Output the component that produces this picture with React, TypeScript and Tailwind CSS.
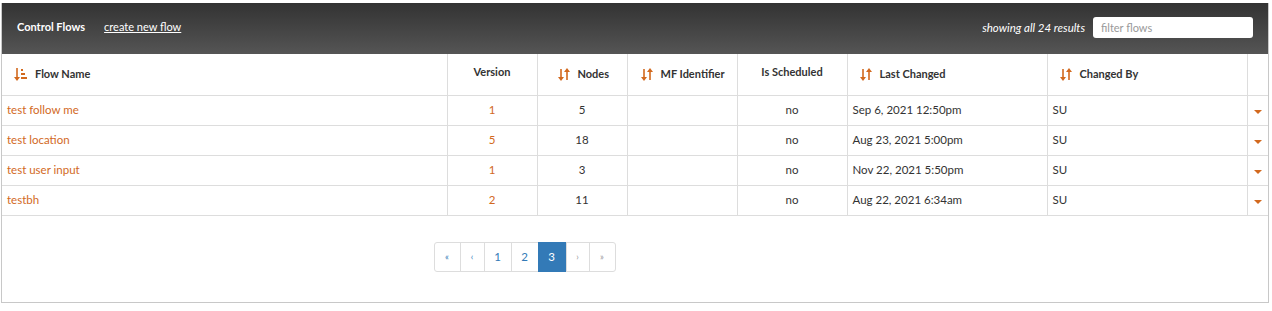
import React from "react"

const rows = [
  { name: "test follow me", version: 1, nodes: 5, sched: "no", changed: "Sep 6, 2021 12:50pm", by: "SU" },
  { name: "test location", version: 5, nodes: 18, sched: "no", changed: "Aug 23, 2021 5:00pm", by: "SU" },
  { name: "test user input", version: 1, nodes: 3, sched: "no", changed: "Nov 22, 2021 5:50pm", by: "SU" },
  { name: "testbh", version: 2, nodes: 11, sched: "no", changed: "Aug 22, 2021 6:34am", by: "SU" },
]

function SortBoth() {
  return (
    <svg width="12" height="13" viewBox="0 0 12 13" className="inline-block mr-2 -mt-0.5 align-middle">
      <g stroke="#d2691e" strokeWidth="1.6" fill="#d2691e">
        <line x1="3" y1="1" x2="3" y2="10" />
        <line x1="9" y1="3" x2="9" y2="12" />
      </g>
      <polygon points="0,9 6,9 3,13" fill="#d2691e" />
      <polygon points="6,4 12,4 9,0" fill="#d2691e" />
    </svg>
  )
}

function SortDown() {
  return (
    <svg width="13" height="13" viewBox="0 0 13 13" className="inline-block mr-2 -mt-0.5 align-middle">
      <line x1="3" y1="0" x2="3" y2="10" stroke="#d2691e" strokeWidth="1.6" />
      <polygon points="0,9 6,9 3,13" fill="#d2691e" />
      <rect x="7" y="1" width="2" height="2" fill="#d2691e" />
      <rect x="7" y="5" width="4" height="2" fill="#d2691e" />
      <rect x="7" y="9" width="6" height="2" fill="#d2691e" />
    </svg>
  )
}

export default function App() {
  const th = "border-l border-[#dddddd] text-[11px] font-bold text-[#333333] h-[41px] align-middle"
  const td = "border-l border-t border-[#dddddd] h-[30px] text-[11.5px] align-middle"
  return (
    <div className="bg-white pt-[3px] px-[1px] pb-[8px]" style={{ fontFamily: "Lato, 'Noto Sans', sans-serif" }}>
      <div className="border border-[#c8c8c8] border-t-0 w-[1268px]">
        <div className="h-[51px] flex items-center justify-between pl-[15px] pr-[15px] bg-gradient-to-b from-[#333333] to-[#555555]">
          <div className="flex items-center gap-[19px] pb-[2px]">
            <span className="text-white text-[11px] font-bold">Control Flows</span>
            <span className="text-white text-[11px] underline">create new flow</span>
          </div>
          <div className="flex items-center gap-[8px] pb-[2px]">
            <span className="text-white text-[11.5px] italic">showing all 24 results</span>
            <input
              placeholder="filter flows"
              className="w-[160px] h-[21px] rounded-[3px] bg-white px-[8px] text-[11px] text-[#333] placeholder:text-[#999999] outline-none"
            />
          </div>
        </div>
        <table className="w-full border-collapse table-fixed">
          <colgroup>
            <col className="w-[445px]" />
            <col className="w-[90px]" />
            <col className="w-[90px]" />
            <col className="w-[110px]" />
            <col className="w-[110px]" />
            <col className="w-[200px]" />
            <col className="w-[200px]" />
            <col />
          </colgroup>
          <thead>
            <tr>
              <th className={th + " text-left pl-[12px] border-l-0"}><SortDown />Flow Name</th>
              <th className={th + " text-center pb-[4px]"}>Version</th>
              <th className={th + " text-left pl-[20px]"}><SortBoth />Nodes</th>
              <th className={th + " text-left pl-[13px]"}><SortBoth />MF Identifier</th>
              <th className={th + " text-center pb-[4px]"}>Is Scheduled</th>
              <th className={th + " text-left pl-[12px]"}><SortBoth />Last Changed</th>
              <th className={th + " text-left pl-[12px]"}><SortBoth />Changed By</th>
              <th className={th}></th>
            </tr>
          </thead>
          <tbody>
            {rows.map((r) => (
              <tr key={r.name}>
                <td className={td + " border-l-0 pl-[5px] text-[#d2691e]"}>{r.name}</td>
                <td className={td + " text-center text-[#d2691e]"}>{r.version}</td>
                <td className={td + " text-center text-[#333]"}>{r.nodes}</td>
                <td className={td}></td>
                <td className={td + " text-center text-[#333]"}>{r.sched}</td>
                <td className={td + " pl-[5px] text-[#333]"}>{r.changed}</td>
                <td className={td + " pl-[5px] text-[#333]"}>{r.by}</td>
                <td className={td + " text-center"}>
                  <span className="inline-block w-0 h-0 border-l-[4px] border-r-[4px] border-t-[4px] border-l-transparent border-r-transparent border-t-[#d2691e] ml-[1px] mt-[4px]" />
                </td>
              </tr>
            ))}
            <tr>
              <td colSpan={8} className="border-t border-[#dddddd] p-0">
                <div className="flex justify-center pt-[26px] pb-[30px] pr-[221px]">
                  <div className="flex border border-[#dddddd] rounded-[3px] h-[30px] text-[11.5px] text-[#337ab7]">
                    <span className="w-[25px] flex items-center justify-center text-[9px]">«</span>
                    <span className="w-[24px] flex items-center justify-center border-l border-[#dddddd] text-[9px]">‹</span>
                    <span className="w-[27px] flex items-center justify-center border-l border-[#dddddd]">1</span>
                    <span className="w-[27px] flex items-center justify-center border-l border-[#dddddd]">2</span>
                    <span className="w-[28px] flex items-center justify-center bg-[#337ab7] text-white -my-px">3</span>
                    <span className="w-[23px] flex items-center justify-center border-l border-[#dddddd] text-[9px] text-[#999]">›</span>
                    <span className="w-[26px] flex items-center justify-center border-l border-[#dddddd] text-[9px] text-[#999]">»</span>
                  </div>
                </div>
              </td>
            </tr>
          </tbody>
        </table>
      </div>
    </div>
  )
}
